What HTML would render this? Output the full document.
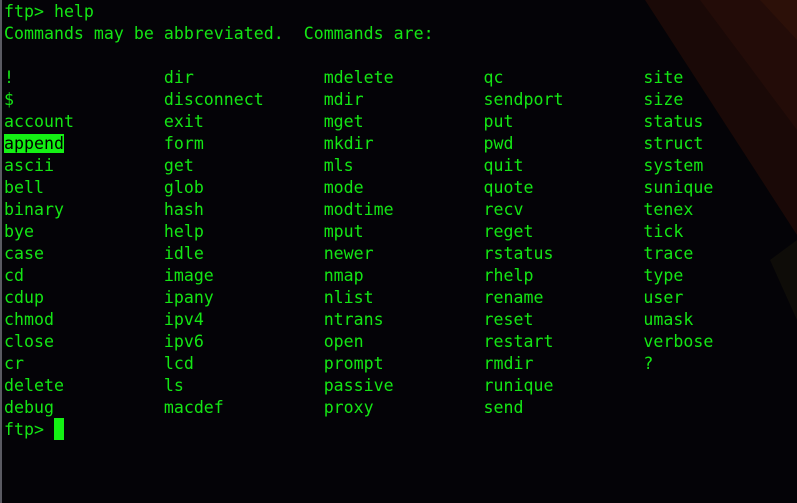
<!DOCTYPE html>
<html><head><style>
html,body{margin:0;padding:0;width:797px;height:503px;overflow:hidden;background:#040307;}
.bg{position:absolute;left:0;top:0;}
.edge{position:absolute;left:0;top:0;width:2px;height:503px;background:#5a5a62;}
pre{position:absolute;left:4px;top:1px;margin:0;font-family:"DejaVu Sans Mono","Liberation Mono",monospace;font-size:16.6px;line-height:22px;color:#14e614;white-space:pre;}
.hl{background:#14f014;color:#000;}
.cur{position:absolute;left:54px;top:418px;width:10px;height:22px;background:#14f014;}
</style></head><body>
<svg class="bg" width="797" height="503">
<polygon points="645,0 797,0 797,235" fill="#1a0907"/>
<polygon points="700,0 797,0 797,130" fill="#230c08"/>
<polygon points="760,0 797,0 797,40" fill="#2c1008"/>
<polygon points="770,260 797,240 797,320" fill="#0e0c08"/>
</svg>
<div class="edge"></div>
<pre>ftp&gt; help
Commands may be abbreviated.  Commands are:

!               dir             mdelete         qc              site
$               disconnect      mdir            sendport        size
account         exit            mget            put             status
<span class="hl">append</span>          form            mkdir           pwd             struct
ascii           get             mls             quit            system
bell            glob            mode            quote           sunique
binary          hash            modtime         recv            tenex
bye             help            mput            reget           tick
case            idle            newer           rstatus         trace
cd              image           nmap            rhelp           type
cdup            ipany           nlist           rename          user
chmod           ipv4            ntrans          reset           umask
close           ipv6            open            restart         verbose
cr              lcd             prompt          rmdir           ?
delete          ls              passive         runique
debug           macdef          proxy           send
ftp&gt; </pre>
<div class="cur"></div>
</body></html>
